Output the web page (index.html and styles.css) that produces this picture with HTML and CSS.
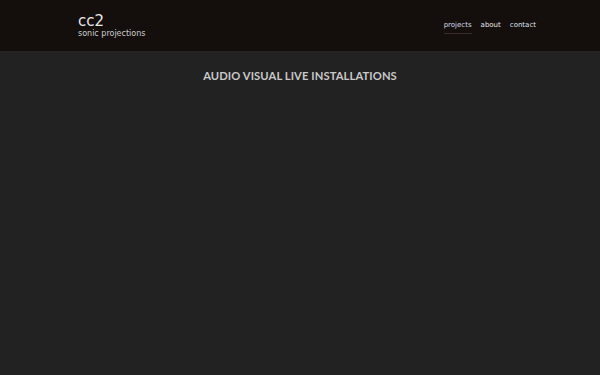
FILE: index.html
```html
<!DOCTYPE html>
<html lang="en">
<head>
    <meta charset="UTF-8">
    <meta name="viewport" content="width=device-width, initial-scale=1.0">
    <title>cc2 - sonic projections</title>
    <link rel="stylesheet" href="styles.css">
</head>
<body>
    <header class="site-header">
        <div class="header-inner">
            <a class="brand" href="#">
                <span class="brand-name">cc2</span>
                <span class="brand-tag">sonic projections</span>
            </a>
            <nav class="main-nav">
                <a href="#" class="nav-link active">projects</a>
                <a href="#" class="nav-link">about</a>
                <a href="#" class="nav-link">contact</a>
            </nav>
        </div>
    </header>
    <main class="content">
        <h1 class="page-title">AUDIO VISUAL LIVE INSTALLATIONS</h1>
    </main>
</body>
</html>
```

FILE: styles.css
```css
* {
    box-sizing: border-box;
}

body {
    margin: 0;
    min-height: 100vh;
    background-color: #222222;
    font-family: 'Open Sans', sans-serif;
}

.site-header {
    background-color: #140e0d;
    height: 51px;
}

.header-inner {
    display: flex;
    justify-content: space-between;
    align-items: center;
    height: 100%;
    padding: 0 64px 0 78px;
}

.brand {
    display: flex;
    flex-direction: column;
    text-decoration: none;
    color: #e8e8e8;
    font-family: 'DejaVu Sans', sans-serif;
    margin-top: 1px;
}

.brand-name {
    font-size: 15px;
    line-height: 16px;
    font-weight: normal;
}

.brand-tag {
    font-size: 8px;
    line-height: 10px;
    color: #cfcfcf;
}

.main-nav {
    display: flex;
    gap: 9px;
    margin-top: 4px;
}

.nav-link {
    font-family: 'DejaVu Sans', sans-serif;
    font-size: 7px;
    color: #e8e8e8;
    text-decoration: none;
    padding-bottom: 4px;
    border-bottom: 1px solid transparent;
}

.nav-link.active {
    color: #d6dcea;
    border-bottom-color: #3a2a28;
}

.nav-link:last-child {
    color: #dde3ef;
}

.content {
    padding-top: 18px;
}

.page-title {
    margin: 0;
    text-align: center;
    font-family: 'Lato', sans-serif;
    font-size: 11.2px;
    font-weight: 700;
    color: #c9c9c9;
    letter-spacing: 0.1px;
}
```
